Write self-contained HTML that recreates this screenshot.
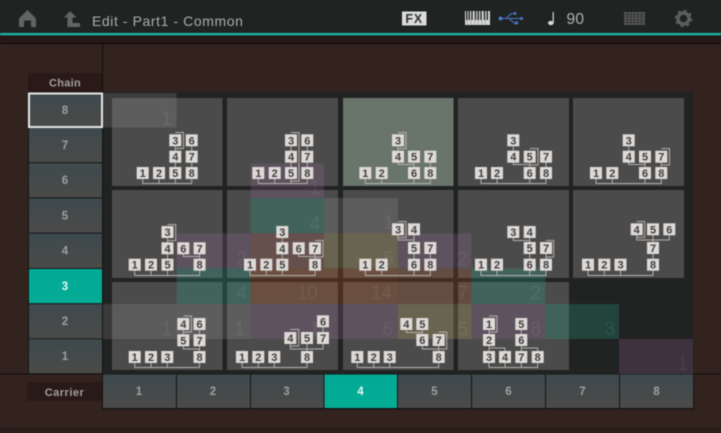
<!DOCTYPE html>
<html><head><meta charset="utf-8"><style>
html,body{margin:0;padding:0;background:#32231f;width:721px;height:433px;overflow:hidden}
svg{display:block;filter:blur(.5px)}
text{font-family:"Liberation Sans",sans-serif}
.b rect{x:-6px;y:-6px;width:12px;height:12px;fill:#dedad7}
.b text{font-size:11px;font-weight:bold;fill:#404040;text-anchor:middle}
.b g text{transform:translateY(4px)}
.l{fill:none;stroke:#b4b1ad;stroke-width:1}
.n{font-size:19px;text-anchor:end;fill:rgba(255,255,255,.07)}
.k{font-size:11.5px;font-weight:bold;fill:#a0a0a0;text-anchor:middle}
.a{font-size:11.5px;font-weight:bold;fill:#e8f5f2;text-anchor:middle}
.t{fill:rgba(40,170,140,.25)}.p{fill:rgba(150,105,150,.24)}.o{fill:rgba(205,90,30,.24)}.y{fill:rgba(190,175,90,.25)}.w{fill:rgba(165,160,165,.22)}
</style></head><body>
<svg width="721" height="433" viewBox="0 0 721 433" xmlns="http://www.w3.org/2000/svg">
<defs>
<linearGradient id="g" x1="0" y1="0" x2="0" y2="1"><stop offset="0" stop-color="#3e4a4e"/><stop offset="1" stop-color="#4b4b48"/></linearGradient>
<linearGradient id="ga" x1="0" y1="0" x2="0" y2="1"><stop offset="0" stop-color="#02a995"/><stop offset="1" stop-color="#05ad95"/></linearGradient>
</defs>
<rect width="721" height="433" fill="#32231f"/>
<rect width="721" height="33" fill="#1f2322"/>
<rect y="33" width="721" height="2.4" fill="#1ab5a3"/>
<rect y="35.4" width="721" height="7.6" fill="#251815"/>
<rect y="43" width="721" height="1" fill="#0f0a09"/>
<rect x="102" y="43" width="1" height="50" fill="#120c0b"/>
<rect y="373.5" width="721" height="1" fill="#140d0c"/>
<rect y="428" width="721" height="1" fill="#1d1411"/>
<rect y="429" width="721" height="4" fill="#2b1e1b"/>

<!-- header -->
<path d="M19 18.5L27.5 10L36 18.5V27H31V20.5H24V27H19Z" fill="#636565"/>
<path d="M70 11L76.5 17.5H72.5V23H80V27H67.5V17.5H64Z" fill="#636565"/>
<text x="92" y="26" font-size="14" fill="#adadad" letter-spacing=".58">Edit - Part1 - Common</text>
<rect x="402" y="11.5" width="24.5" height="14" fill="#dcdcdc"/>
<text x="414.2" y="23" font-size="12.5" font-weight="bold" fill="#333" text-anchor="middle" letter-spacing=".8">FX</text>
<rect x="465" y="11" width="25" height="14" fill="#d8d8d8"/>
<path d="M466.8 11V20M469.2 11V20M472 11V20M475.5 11V20M478.2 11V20M481 11V20M484.5 11V20M487.3 11V20" stroke="#1f2322" stroke-width="1.4"/>
<path d="M467.5 20V25M471 20V25M474.6 20V25M478.2 20V25M481.8 20V25M485.4 20V25" stroke="#8b8b8b" stroke-width=".6"/>
<g fill="#4b78c4" stroke="#4b78c4"><circle cx="500.5" cy="18.5" r="2" stroke="none"/><path d="M500 18.5H522M506 18.5L511.5 13.5H514M509 18.5L514 23H516" fill="none" stroke-width="1.1"/><circle cx="515" cy="13.5" r="1.5" stroke="none"/><rect x="515" y="21.5" width="3" height="3" stroke="none"/><path d="M524 18.5L520.5 16.5V20.5Z" stroke="none"/></g>
<ellipse cx="550.8" cy="23" rx="2.8" ry="2.1" fill="#d8d8d8"/><rect x="552.6" y="12" width="1.2" height="11" fill="#d8d8d8"/>
<text x="566.5" y="24" font-size="15.5" fill="#b4b4b4" letter-spacing=".3">90</text>
<rect x="624" y="12" width="21" height="13" fill="#5a5a5a"/>
<path d="M627.5 12V25M631 12V25M634.5 12V25M638 12V25M641.5 12V25M624 14.6H645M624 17.2H645M624 19.8H645M624 22.4H645" stroke="#2a2d2c" stroke-width=".7"/>
<circle cx="683.5" cy="18.5" r="5.5" fill="none" stroke="#5e5f5f" stroke-width="3.4"/>
<circle cx="683.5" cy="18.5" r="8" fill="none" stroke="#5e5f5f" stroke-width="1.6" stroke-dasharray="3 3.28"/>

<!-- Chain column -->
<rect x="28" y="73" width="74" height="19" fill="#2a1a17"/>
<text x="65" y="86.5" font-size="11" font-weight="bold" fill="#a3a09e" text-anchor="middle" letter-spacing=".3">Chain</text>
<rect x="28" y="92" width="75" height="282" fill="#141413"/>
<rect x="29" y="128" width="73" height="34.2" fill="url(#g)"/>
<rect x="29" y="163.2" width="73" height="34.2" fill="url(#g)"/>
<rect x="29" y="198.4" width="73" height="34.2" fill="url(#g)"/>
<rect x="29" y="233.6" width="73" height="34.4" fill="url(#g)"/>
<rect x="29" y="269" width="73" height="34.2" fill="url(#ga)"/>
<rect x="29" y="304.2" width="73" height="34.2" fill="url(#g)"/>
<rect x="29" y="339.2" width="73" height="34" fill="url(#g)"/>
<rect x="29" y="93.5" width="73" height="33.5" fill="url(#g)" stroke="#e6e6e6" stroke-width="2"/>
<text class="k" x="65" y="114">8</text>
<text class="k" x="65" y="149">7</text>
<text class="k" x="65" y="184">6</text>
<text class="k" x="65" y="219.5">5</text>
<text class="k" x="65" y="254.5">4</text>
<text class="a" x="65" y="290">3</text>
<text class="k" x="65" y="325">2</text>
<text class="k" x="65" y="360">1</text>

<!-- Carrier row -->
<rect x="27" y="382" width="75" height="19" fill="#2a1a17"/>
<text x="64.5" y="396" font-size="11" font-weight="bold" fill="#a3a09e" text-anchor="middle" letter-spacing=".5">Carrier</text>
<rect x="102" y="374" width="592" height="35.5" fill="#141413"/>
<rect x="103" y="374.5" width="73" height="33.5" fill="url(#g)"/>
<rect x="177" y="374.5" width="73" height="33.5" fill="url(#g)"/>
<rect x="251" y="374.5" width="72.5" height="33.5" fill="url(#g)"/>
<rect x="324.5" y="374.5" width="72.5" height="33.5" fill="url(#ga)"/>
<rect x="398" y="374.5" width="73" height="33.5" fill="url(#g)"/>
<rect x="472" y="374.5" width="73" height="33.5" fill="url(#g)"/>
<rect x="546" y="374.5" width="73" height="33.5" fill="url(#g)"/>
<rect x="620" y="374.5" width="73" height="33.5" fill="url(#g)"/>
<text class="k" x="139" y="395">1</text>
<text class="k" x="213" y="395">2</text>
<text class="k" x="286.5" y="395">3</text>
<text class="a" x="360.5" y="395">4</text>
<text class="k" x="434.5" y="395">5</text>
<text class="k" x="508.5" y="395">6</text>
<text class="k" x="582.5" y="395">7</text>
<text class="k" x="656.5" y="395">8</text>

<!-- grid panel -->
<rect x="103" y="92" width="590.5" height="282" fill="#212222"/>
<g fill="#4b4b4b">
<rect x="112" y="98" width="110.5" height="88"/><rect x="227" y="98" width="111" height="88"/><rect x="343" y="98" width="110.5" height="88" fill="#69746a"/><rect x="458" y="98" width="111" height="88"/><rect x="573" y="98" width="111" height="88"/>
<rect x="112" y="190" width="110.5" height="88"/><rect x="227" y="190" width="111" height="88"/><rect x="343" y="190" width="110.5" height="88"/><rect x="458" y="190" width="111" height="88"/><rect x="573" y="190" width="111" height="88"/>
<rect x="112" y="282" width="110.5" height="88"/><rect x="227" y="282" width="111" height="88"/><rect x="343" y="282" width="110.5" height="88"/><rect x="458" y="282" width="111" height="88"/>
</g>

<!-- overlay cells -->
<rect class="w" x="103" y="93" width="73.5" height="34.5"/>
<rect class="p" x="250.7" y="163.3" width="73.3" height="34.7"/>
<rect class="t" x="250.7" y="198" width="73.3" height="35.3"/>
<rect class="w" x="324" y="198" width="73.7" height="35.3"/>
<rect class="p" x="176.7" y="233.3" width="74" height="35"/>
<rect class="o" x="250.7" y="233.3" width="73.3" height="35" opacity=".65"/><rect class="p" x="250.7" y="233.3" width="73.3" height="35" opacity=".5"/>
<rect class="y" x="324" y="233.3" width="73.7" height="35"/>
<rect class="p" x="397.7" y="233.3" width="73.8" height="35"/>
<rect class="t" x="176.7" y="268.3" width="74" height="35.7"/>
<rect class="o" x="250.7" y="268.3" width="73.3" height="35.7"/>
<rect class="o" x="324" y="268.3" width="73.7" height="35.7"/>
<rect class="o" x="397.7" y="268.3" width="73.8" height="35.7" opacity=".8"/>
<rect class="t" x="471.5" y="268.3" width="73.8" height="35.7"/>
<rect class="w" x="103" y="304" width="73.7" height="35" opacity=".9"/>
<rect class="w" x="176.7" y="304" width="74" height="35"/>
<rect class="p" x="250.7" y="304" width="73.3" height="35"/>
<rect class="p" x="324" y="304" width="73.7" height="35"/>
<rect class="y" x="397.7" y="304" width="73.8" height="35"/>
<rect class="p" x="471.5" y="304" width="73.8" height="35"/>
<rect class="t" x="545.3" y="304" width="73.7" height="35"/>
<rect class="p" x="619" y="339" width="74" height="35"/>
<text class="n" x="172" y="125">1</text>
<text class="n" x="320" y="194">1</text>
<text class="n" x="320" y="230">4</text>
<text class="n" x="394" y="229">1</text>
<text class="n" x="247" y="265">2</text>
<text class="n" x="320" y="265">3</text>
<text class="n" x="394" y="265">5</text>
<text class="n" x="468" y="265">2</text>
<text class="n" x="247" y="299">4</text>
<text class="n" x="318" y="299">10</text>
<text class="n" x="392" y="299">14</text>
<text class="n" x="468" y="299">7</text>
<text class="n" x="541" y="299">2</text>
<text class="n" x="172" y="335">1</text>
<text class="n" x="245" y="335">1</text>
<text class="n" x="320" y="335">1</text>
<text class="n" x="393" y="335">6</text>
<text class="n" x="468" y="335">5</text>
<text class="n" x="541" y="335">8</text>
<text class="n" x="615" y="335">3</text>
<text class="n" x="688" y="370">1</text>

<!-- connection lines -->
<path class="l" d="M142.7 173V183.5H191.7V173M159 173V183.5M175.3 140V183.5M191.7 140V183.5M175.3 132.5H183.5V148.5H175.3"/>
<path class="l" d="M258.3 173V183.5H307.3V173M274.7 173V183.5M291 140V183.5M307.3 140V183.5M291 132.5H299V181H291"/>
<path class="l" d="M365.3 173V183.5H430.3V173M381.7 173V183.5M414 156V183.5M430.3 156V183.5M398 140V164.5H414M398 132.5H406V148.5H398"/>
<path class="l" d="M481 173V183.5H546V173M497 173V183.5M529.7 156V183.5M546 156V183.5M513.3 140V164.5H529.7M529.7 148.5H538V165H529.7"/>
<path class="l" d="M596 173V183.5H661.3V173M612.3 173V183.5M645 156V183.5M661.3 156V183.5M628.7 140V164.5H645M661.3 148.5H669.5V165H661.3"/>
<path class="l" d="M134.7 265V275.5H199.6V265M151 265V275.5M167.5 232V275.5M199.6 248V275.5M183.3 248V256.5H199.6M167.5 224.5H175.7V240.5H167.5"/>
<path class="l" d="M250 265V275.5H315V265M266.3 265V275.5M282.3 232V275.5M315 248V275.5M298.7 248V256.5H315M315 240.5H323V257H315"/>
<path class="l" d="M365.3 265V275.5H430.3V265M381.7 265V275.5M414 229V275.5M430.3 248V275.5M398 229V240H414M398 221.5H406V237.5H398"/>
<path class="l" d="M481 265V275.5H546V265M497 265V275.5M529.7 232V275.5M546 248V275.5M513.3 232V240.5H529.7M546 240.5H553.7V257H546"/>
<path class="l" d="M588 265V275.5H653V265M604.3 265V275.5M620.5 265V275.5M653 229V275.5M636.7 229V240H669.3V229M636.7 221.5H644.7V237.5H636.7"/>
<path class="l" d="M134.7 357V367.5H199.5V357M151 357V367.5M167.3 357V367.5M199.5 324V367.5M183.3 324V349H199.5M183.3 316H191.5V332H183.3"/>
<path class="l" d="M242 357V367.5H307V357M258.3 357V367.5M274.3 357V367.5M307 338V367.5M290.3 338V349H323V321M290.3 329.5H298.7V346H290.3"/>
<path class="l" d="M357.3 357V367.5H438.7V357M373.7 357V367.5M389.7 357V367.5M438.7 340V367.5M422.3 324V349H438.7M406.3 324V332.5H422.3M438.7 332H446.7V349H438.7"/>
<path class="l" d="M489 357V367.5H537.7V357M505 348V367.5M521.3 324V367.5M489 324V357M489 348H505M521.3 348H537.7V357M489 316H497V332H489"/>

<!-- operator boxes -->
<g class="b">
<g transform="translate(142.7 173)"><rect/><text>1</text></g><g transform="translate(159 173)"><rect/><text>2</text></g><g transform="translate(175.3 173)"><rect/><text>5</text></g><g transform="translate(191.7 173)"><rect/><text>8</text></g><g transform="translate(175.3 156.7)"><rect/><text>4</text></g><g transform="translate(191.7 156.7)"><rect/><text>7</text></g><g transform="translate(175.3 140.3)"><rect/><text>3</text></g><g transform="translate(191.7 140.3)"><rect/><text>6</text></g>

<g transform="translate(258.3 173)"><rect/><text>1</text></g><g transform="translate(274.7 173)"><rect/><text>2</text></g><g transform="translate(291 173)"><rect/><text>5</text></g><g transform="translate(307.3 173)"><rect/><text>8</text></g><g transform="translate(291 156.7)"><rect/><text>4</text></g><g transform="translate(307.3 156.7)"><rect/><text>7</text></g><g transform="translate(291 140.3)"><rect/><text>3</text></g><g transform="translate(307.3 140.3)"><rect/><text>6</text></g>

<g transform="translate(365.3 173)"><rect/><text>1</text></g><g transform="translate(381.7 173)"><rect/><text>2</text></g><g transform="translate(414 173)"><rect/><text>6</text></g><g transform="translate(430.3 173)"><rect/><text>8</text></g><g transform="translate(398 156.7)"><rect/><text>4</text></g><g transform="translate(414 156.7)"><rect/><text>5</text></g><g transform="translate(430.3 156.7)"><rect/><text>7</text></g><g transform="translate(398 140.3)"><rect/><text>3</text></g>

<g transform="translate(481 173)"><rect/><text>1</text></g><g transform="translate(497 173)"><rect/><text>2</text></g><g transform="translate(529.7 173)"><rect/><text>6</text></g><g transform="translate(546 173)"><rect/><text>8</text></g><g transform="translate(513.3 156.7)"><rect/><text>4</text></g><g transform="translate(529.7 156.7)"><rect/><text>5</text></g><g transform="translate(546 156.7)"><rect/><text>7</text></g><g transform="translate(513.3 140.3)"><rect/><text>3</text></g>

<g transform="translate(596 173)"><rect/><text>1</text></g><g transform="translate(612.3 173)"><rect/><text>2</text></g><g transform="translate(645 173)"><rect/><text>6</text></g><g transform="translate(661.3 173)"><rect/><text>8</text></g><g transform="translate(628.7 156.7)"><rect/><text>4</text></g><g transform="translate(645 156.7)"><rect/><text>5</text></g><g transform="translate(661.3 156.7)"><rect/><text>7</text></g><g transform="translate(628.7 140.3)"><rect/><text>3</text></g>

<g transform="translate(134.7 264.7)"><rect/><text>1</text></g><g transform="translate(151 264.7)"><rect/><text>2</text></g><g transform="translate(167.5 264.7)"><rect/><text>5</text></g><g transform="translate(199.6 264.7)"><rect/><text>8</text></g><g transform="translate(167.5 248.3)"><rect/><text>4</text></g><g transform="translate(183.3 248.3)"><rect/><text>6</text></g><g transform="translate(199.6 248.3)"><rect/><text>7</text></g><g transform="translate(167.5 232)"><rect/><text>3</text></g>

<g transform="translate(250 264.7)"><rect/><text>1</text></g><g transform="translate(266.3 264.7)"><rect/><text>2</text></g><g transform="translate(282.3 264.7)"><rect/><text>5</text></g><g transform="translate(315 264.7)"><rect/><text>8</text></g><g transform="translate(282.3 248.3)"><rect/><text>4</text></g><g transform="translate(298.7 248.3)"><rect/><text>6</text></g><g transform="translate(315 248.3)"><rect/><text>7</text></g><g transform="translate(282.3 232)"><rect/><text>3</text></g>

<g transform="translate(365.3 264.7)"><rect/><text>1</text></g><g transform="translate(381.7 264.7)"><rect/><text>2</text></g><g transform="translate(414 264.7)"><rect/><text>6</text></g><g transform="translate(430.3 264.7)"><rect/><text>8</text></g><g transform="translate(414 248)"><rect/><text>5</text></g><g transform="translate(430.3 248)"><rect/><text>7</text></g><g transform="translate(398 229.3)"><rect/><text>3</text></g><g transform="translate(414 229.3)"><rect/><text>4</text></g>

<g transform="translate(481 264.7)"><rect/><text>1</text></g><g transform="translate(497 264.7)"><rect/><text>2</text></g><g transform="translate(529.7 264.7)"><rect/><text>6</text></g><g transform="translate(546 264.7)"><rect/><text>8</text></g><g transform="translate(529.7 248)"><rect/><text>5</text></g><g transform="translate(546 248)"><rect/><text>7</text></g><g transform="translate(513.3 232)"><rect/><text>3</text></g><g transform="translate(529.7 232)"><rect/><text>4</text></g>

<g transform="translate(588 264.7)"><rect/><text>1</text></g><g transform="translate(604.3 264.7)"><rect/><text>2</text></g><g transform="translate(620.5 264.7)"><rect/><text>3</text></g><g transform="translate(653 264.7)"><rect/><text>8</text></g><g transform="translate(653 248)"><rect/><text>7</text></g><g transform="translate(636.7 229.3)"><rect/><text>4</text></g><g transform="translate(653 229.3)"><rect/><text>5</text></g><g transform="translate(669.3 229.3)"><rect/><text>6</text></g>

<g transform="translate(134.7 357)"><rect/><text>1</text></g><g transform="translate(151 357)"><rect/><text>2</text></g><g transform="translate(167.3 357)"><rect/><text>3</text></g><g transform="translate(199.5 357)"><rect/><text>8</text></g><g transform="translate(183.3 340.3)"><rect/><text>5</text></g><g transform="translate(199.5 340.3)"><rect/><text>7</text></g><g transform="translate(183.3 324)"><rect/><text>4</text></g><g transform="translate(199.5 324)"><rect/><text>6</text></g>

<g transform="translate(242 357)"><rect/><text>1</text></g><g transform="translate(258.3 357)"><rect/><text>2</text></g><g transform="translate(274.3 357)"><rect/><text>3</text></g><g transform="translate(307 357)"><rect/><text>8</text></g><g transform="translate(290.3 338)"><rect/><text>4</text></g><g transform="translate(307 338)"><rect/><text>5</text></g><g transform="translate(323 338)"><rect/><text>7</text></g><g transform="translate(323 321.3)"><rect/><text>6</text></g>

<g transform="translate(357.3 357)"><rect/><text>1</text></g><g transform="translate(373.7 357)"><rect/><text>2</text></g><g transform="translate(389.7 357)"><rect/><text>3</text></g><g transform="translate(438.7 357)"><rect/><text>8</text></g><g transform="translate(422.3 340)"><rect/><text>6</text></g><g transform="translate(438.7 340)"><rect/><text>7</text></g><g transform="translate(406.3 324)"><rect/><text>4</text></g><g transform="translate(422.3 324)"><rect/><text>5</text></g>

<g transform="translate(489 357)"><rect/><text>3</text></g><g transform="translate(505 357)"><rect/><text>4</text></g><g transform="translate(521.3 357)"><rect/><text>7</text></g><g transform="translate(537.7 357)"><rect/><text>8</text></g><g transform="translate(489 340)"><rect/><text>2</text></g><g transform="translate(521.3 340)"><rect/><text>6</text></g><g transform="translate(489 324)"><rect/><text>1</text></g><g transform="translate(521.3 324)"><rect/><text>5</text></g>
</g>
</svg>
</body></html>
